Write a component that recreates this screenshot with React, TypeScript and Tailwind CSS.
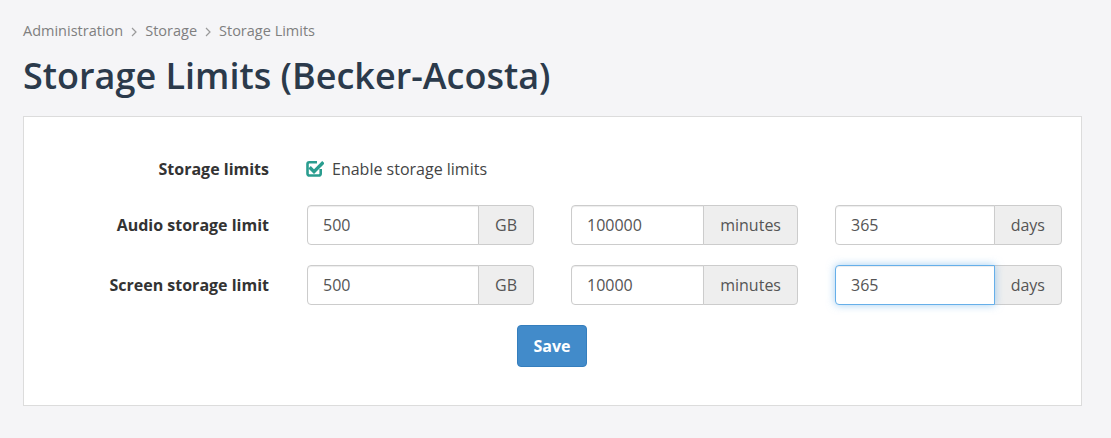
import React from "react";

function CheckSquare() {
  return (
    <svg width="18" height="18" viewBox="0 0 18 18" className="shrink-0">
      <path d="M14.7 9 V13.7 A1.8 1.8 0 0 1 12.9 15.5 H3.3 A1.8 1.8 0 0 1 1.5 13.7 V4.1 A1.8 1.8 0 0 1 3.3 2.3 H11" fill="none" stroke="#2a9d8f" strokeWidth="2.6" />
      <path d="M4.8 8.4 L8 11.6 L16.2 3.4" fill="none" stroke="#2a9d8f" strokeWidth="3.4" strokeLinecap="square" />
    </svg>
  );
}

function Chevron() {
  return (
    <svg width="8" height="10" viewBox="0 0 8 10" className="mx-[7px] mt-[1px]">
      <path d="M2 1 L6 5 L2 9" fill="none" stroke="#9a9a9a" strokeWidth="1.2" />
    </svg>
  );
}

function InputGroup({ value, unit, focused }: { value: string; unit: string; focused?: boolean }) {
  return (
    <div className="flex h-[40px] w-[227px]">
      <div
        className={
          focused
            ? "relative z-10 flex flex-1 items-center rounded-l-[4px] border border-[#66afe9] bg-white pl-[15px] text-[16px] text-[#555] shadow-[inset_0_1px_1px_rgba(0,0,0,0.075),0_0_8px_rgba(102,175,233,0.6)]"
            : "flex flex-1 items-center rounded-l-[4px] border border-[#ccc] bg-white pl-[15px] text-[16px] text-[#555] shadow-[inset_0_1px_1px_rgba(0,0,0,0.075)]"
        }
      >
        {value}
      </div>
      <div className="-ml-px flex items-center rounded-r-[4px] border border-[#ccc] bg-[#eee] px-[16px] text-[16px] text-[#555]">
        {unit}
      </div>
    </div>
  );
}

export default function App() {
  return (
    <div
      className="min-h-[438px] bg-[#f5f5f7] px-[23px] pt-[19px]"
      style={{ fontFamily: '"Open Sans", "Noto Sans", sans-serif' }}
    >
      <div className="flex items-center text-[14.5px] leading-[24px] text-[#7f7f7f]">
        <span>Administration</span>
        <Chevron />
        <span>Storage</span>
        <Chevron />
        <span>Storage Limits</span>
      </div>
      <h1 className="mt-[10px] text-[36px] font-semibold leading-[46px] text-[#2b3a4b]">
        Storage Limits (Becker-Acosta)
      </h1>
      <div className="mt-[17px] w-[1059px] border border-[#dcdcdc] bg-white pb-[38px] pt-[33px]">
        <div className="flex h-[38px] items-center">
          <div className="w-[245px] text-right text-[16px] font-bold text-[#333]">Storage limits</div>
          <div className="ml-[37px] flex items-center gap-[8px] text-[16px] text-[#444]">
            <CheckSquare />
            <span>Enable storage limits</span>
          </div>
        </div>
        <div className="mt-[17px] flex items-center">
          <div className="w-[245px] text-right text-[16px] font-bold text-[#333]">Audio storage limit</div>
          <div className="ml-[38px] grid grid-cols-[227px_227px_227px] gap-[37px]">
            <InputGroup value="500" unit="GB" />
            <InputGroup value="100000" unit="minutes" />
            <InputGroup value="365" unit="days" />
          </div>
        </div>
        <div className="mt-[20px] flex items-center">
          <div className="w-[245px] text-right text-[16px] font-bold text-[#333]">Screen storage limit</div>
          <div className="ml-[38px] grid grid-cols-[227px_227px_227px] gap-[37px]">
            <InputGroup value="500" unit="GB" />
            <InputGroup value="10000" unit="minutes" />
            <InputGroup value="365" unit="days" focused />
          </div>
        </div>
        <div className="mt-[20px] flex justify-center">
          <button className="ml-[-1px] h-[42px] w-[70px] rounded-[4px] border border-[#357ebd] bg-[#428bca] text-[16px] font-bold text-white">
            Save
          </button>
        </div>
      </div>
    </div>
  );
}
